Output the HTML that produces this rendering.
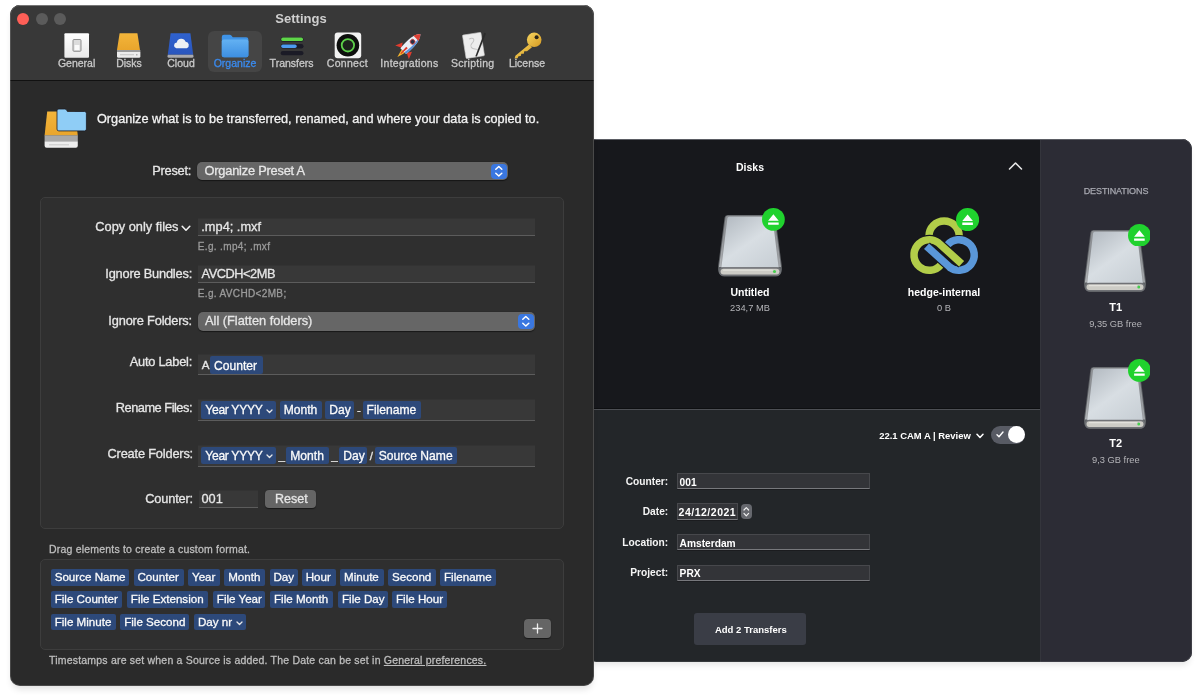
<!DOCTYPE html>
<html lang="en">
<head>
<meta charset="utf-8">
<title>Settings</title>
<style>
*{box-sizing:border-box;margin:0;padding:0}
html,body{width:1200px;height:698px;background:#fff;overflow:hidden}
body{position:relative;font-family:"Liberation Sans",sans-serif;color:#e6e6e6;font-size:12.5px}
.abs,.t,.r{position:absolute}
.t,.r{white-space:nowrap;line-height:16px;height:16px}
.r{text-align:right}
/* ---------- main app window (behind) ---------- */
#app{position:absolute;left:586px;top:139px;width:606px;height:523px;border-radius:10px;background:#232629;overflow:hidden;box-shadow:0 5px 6px -2px rgba(0,0,0,.10)}
#app,#set{will-change:transform}
#app:after,#set:after{content:"";position:absolute;left:0;top:0;right:0;bottom:0;border-radius:10px;border:1px solid rgba(255,255,255,.09);pointer-events:none}
#set:after{border-color:rgba(255,255,255,.15)}
#app .top{position:absolute;left:0;top:0;width:454px;height:270px;background:#17181c;border-bottom:1px solid #0e0f11}
#app .sep{position:absolute;left:0;top:269.500px;width:454px;height:1.300px;background:#4d4f54}
#app .side{position:absolute;left:454px;top:0;width:152px;height:523px;background:#2c2c35;border-left:1px solid #34353c}
#app .hl{position:absolute;left:0;top:0;width:606px;height:1px;background:#4b4d55}
#app .t,#app .r{line-height:14px;height:14px}
.b{font-weight:bold}
#set{-webkit-text-stroke:.3px}
#set .b{-webkit-text-stroke:0}
.c{transform:translateX(-50%)}
.afld{position:absolute;background:#333438;border:1px solid #47484c;border-bottom-color:#77787c;box-shadow:0 1px 0 #1b1c1f}
/* ---------- settings window ---------- */
#set{position:absolute;left:10px;top:5px;width:584px;height:681px;border-radius:10px;background:#2a2a2a;overflow:hidden;box-shadow:0 5px 7px -2px rgba(0,0,0,.12)}
#set .bar{position:absolute;left:0;top:0;width:584px;height:76px;background:#383838;border-bottom:1px solid #111}
#set .bar:before{content:"";position:absolute;left:0;top:0;width:100%;height:1px;background:#5e5e5e}
.tl{position:absolute;top:8px;width:12px;height:12px;border-radius:50%}
.tb{position:absolute;top:52.400px;font-size:10.5px;color:#c9c9c9;line-height:12px;white-space:nowrap;transform:translateX(-50%)}
.grp{position:absolute;background:#2f2f2f;border:1px solid #3d3d3d;border-radius:5px}
.fld{position:absolute;background:#383838;border-bottom:1px solid #5c5c5c;border-top:1px solid #333}
.pop{position:absolute;background:#666;border-radius:5px;box-shadow:0 .5px 1px rgba(0,0,0,.5)}
.pop i{position:absolute;right:1px;top:1.8px;width:16px;height:15px;border-radius:4px;background:#3a77e0}
.tok{position:absolute;height:16px;line-height:16px;background:#2d497a;border-radius:2px;color:#fafafa;white-space:nowrap;padding:0 0 0 4px;font-size:11.6px}
.hint{font-size:10px;color:#9b9b9b}
.btn{position:absolute;background:#656565;border-radius:4px;text-align:center;box-shadow:0 .5px 1px rgba(0,0,0,.5)}
</style>
</head>
<body>

<div id="app">
  <div class="top"></div><div class="sep"></div><div class="side"></div><div class="hl"></div>
  <!--APPBODY-->
  <svg width="0" height="0" style="position:absolute"><defs>
    <linearGradient id="dtop" x1=".1" y1="0" x2=".9" y2="1"><stop offset="0" stop-color="#b4bbc2"/><stop offset=".5" stop-color="#d8dee3"/><stop offset="1" stop-color="#c8cfd5"/></linearGradient><linearGradient id="drim" x1="0" y1="0" x2="1" y2="0"><stop offset="0" stop-color="#b9bcbf"/><stop offset=".08" stop-color="#8d9094"/><stop offset=".92" stop-color="#8d9094"/><stop offset="1" stop-color="#a9acb0"/></linearGradient>
  </defs></svg>
  <div class="t c b" style="left:164px;top:20.7px;font-size:10.5px;color:#fff">Disks</div>
  <svg class="abs" style="left:422px;top:22px" width="15" height="10" viewBox="0 0 15 10"><path d="M1.500 8 7.500 2 13.500 8" fill="none" stroke="#e8e8e8" stroke-width="1.600" stroke-linecap="round" stroke-linejoin="round"/></svg>
  <svg class="abs" style="left:131.3px;top:75.1px" width="66" height="63.5" viewBox="-1 -1 66 63.500" preserveAspectRatio="none">
    <path d="M9.600 0h44.800q2.600 0 3 2.600l6.400 48q.6 4.400-.6 7.200-1.500 3.700-5.600 3.700h-51.200q-4.100 0-5.600-3.700-1.200-2.800-.6-7.200l6.400-48q.4-2.600 3-2.600z" fill="#5f6266"/>
    <path d="M9.800 .8h44.400q2 0 2.300 2l6.500 49.200h-62l6.500-49.200q.3-2 2.300-2z" fill="url(#drim)"/>
    <path d="M11.200 1.800h41.600q1.600 0 1.800 1.500l6 49.200h-57.200l6-49.200q.2-1.500 1.800-1.500z" fill="url(#dtop)"/>
    <rect x=".9" y="52.300" width="62.200" height="8.500" rx="4.200" fill="#707276"/>
    <rect x="2.600" y="53.700" width="58.800" height="5.800" rx="2.900" fill="#cdccc6"/>
    <rect x="5" y="54.600" width="50" height="1.200" rx=".6" fill="#e4e3de" opacity=".9"/>
    <circle cx="56.500" cy="56.500" r="1.500" fill="#45cf4e"/>
    </svg>
  <svg class="abs" style="left:176.3px;top:69.4px" width="22.8" height="22.8" viewBox="-11.4 -11.4 22.8 22.8"><circle r="11.4" fill="#20d22e"/><path d="M0-5.200 5.300 1.300h-10.600zM-5.300 3h10.600v2.300h-10.600z" fill="#fff"/></svg>
  <div class="t c b" style="left:164px;top:145.5px;font-size:10.5px;color:#fff">Untitled</div>
  <div class="t c " style="left:164px;top:162.2px;font-size:9.3px;color:#b4b4b8">234,7 MB</div>
  <svg class="abs" style="left:319px;top:71px" width="80" height="70" viewBox="905 210 80 70">
    <path d="M929 240v-4a15.100 15.100 0 0 1 30.200 0v4" fill="none" stroke="#b2cd49" stroke-width="7.500"/>
    <path d="M947.300 245.200A15.250 15.250 0 1 1 949.800 267.200L926.600 246.200" fill="none" stroke="#17181c" stroke-width="9.700"/>
    <path d="M947.300 245.200A15.250 15.250 0 1 1 949.800 267.200L926.600 246.200" fill="none" stroke="#5a97d9" stroke-width="7.500"/>
    <path d="M940.900 264.800A15.250 15.250 0 1 1 938.400 242.800L961.600 263.800" fill="none" stroke="#17181c" stroke-width="9.700"/>
    <path d="M940.900 264.800A15.250 15.250 0 1 1 938.400 242.800L961.600 263.800" fill="none" stroke="#b2cd49" stroke-width="7.500"/>
    <path d="M949.800 267.200L926.600 246.200" fill="none" stroke="#17181c" stroke-width="9.700" stroke-linecap="butt"/>
    <path d="M951.300 268.550L926.600 246.200" fill="none" stroke="#5a97d9" stroke-width="7.500"/>
  </svg>
  <svg class="abs" style="left:369.6px;top:68.5px" width="23.2" height="23.2" viewBox="-11.6 -11.6 23.2 23.2"><circle r="11.6" fill="#20d22e"/><path d="M0-5.200 5.300 1.300h-10.600zM-5.300 3h10.600v2.300h-10.600z" fill="#fff"/></svg>
  <div class="t c b" style="left:358px;top:145.5px;font-size:10.5px;color:#fff">hedge-internal</div>
  <div class="t c " style="left:358px;top:162.2px;font-size:9.3px;color:#b4b4b8">0 B</div>
  <div class="t c " style="left:530px;top:44.7px;font-size:9px;color:#a8a9b1;letter-spacing:-.1px;-webkit-text-stroke:.25px">DESTINATIONS</div>
  <svg class="abs" style="left:497.2px;top:89.8px" width="64" height="64" viewBox="-1 -1 66 63.500" preserveAspectRatio="none">
    <path d="M9.600 0h44.800q2.600 0 3 2.600l6.400 48q.6 4.400-.6 7.200-1.500 3.700-5.600 3.700h-51.200q-4.100 0-5.600-3.700-1.200-2.800-.6-7.200l6.400-48q.4-2.600 3-2.600z" fill="#5f6266"/>
    <path d="M9.800 .8h44.400q2 0 2.300 2l6.500 49.200h-62l6.500-49.200q.3-2 2.300-2z" fill="url(#drim)"/>
    <path d="M11.200 1.800h41.600q1.600 0 1.800 1.500l6 49.200h-57.200l6-49.200q.2-1.500 1.800-1.500z" fill="url(#dtop)"/>
    <rect x=".9" y="52.300" width="62.200" height="8.500" rx="4.200" fill="#707276"/>
    <rect x="2.600" y="53.700" width="58.800" height="5.800" rx="2.900" fill="#cdccc6"/>
    <rect x="5" y="54.600" width="50" height="1.200" rx=".6" fill="#e4e3de" opacity=".9"/>
    <circle cx="56.500" cy="56.500" r="1.500" fill="#45cf4e"/>
    </svg>
  <svg class="abs" style="left:541.6px;top:84.6px" width="22.8" height="22.8" viewBox="-11.4 -11.4 22.8 22.8"><circle r="11.4" fill="#20d22e"/><path d="M0-5.200 5.300 1.300h-10.600zM-5.300 3h10.600v2.300h-10.600z" fill="#fff"/></svg>
  <div class="t c b" style="left:529.6px;top:161.1px;font-size:11px;color:#fff">T1</div>
  <div class="t c " style="left:529.5px;top:178.2px;font-size:9.3px;color:#b4b4b8">9,35 GB free</div>
  <svg class="abs" style="left:497.2px;top:226.6px" width="64" height="64" viewBox="-1 -1 66 63.500" preserveAspectRatio="none">
    <path d="M9.600 0h44.800q2.600 0 3 2.600l6.400 48q.6 4.400-.6 7.200-1.500 3.700-5.600 3.700h-51.200q-4.100 0-5.600-3.700-1.200-2.800-.6-7.200l6.400-48q.4-2.600 3-2.600z" fill="#5f6266"/>
    <path d="M9.800 .8h44.400q2 0 2.300 2l6.500 49.200h-62l6.500-49.200q.3-2 2.300-2z" fill="url(#drim)"/>
    <path d="M11.200 1.800h41.600q1.600 0 1.800 1.500l6 49.200h-57.200l6-49.200q.2-1.500 1.800-1.500z" fill="url(#dtop)"/>
    <rect x=".9" y="52.300" width="62.200" height="8.500" rx="4.200" fill="#707276"/>
    <rect x="2.600" y="53.700" width="58.800" height="5.800" rx="2.900" fill="#cdccc6"/>
    <rect x="5" y="54.600" width="50" height="1.200" rx=".6" fill="#e4e3de" opacity=".9"/>
    <circle cx="56.500" cy="56.500" r="1.500" fill="#45cf4e"/>
    </svg>
  <svg class="abs" style="left:541.6px;top:220.4px" width="22.8" height="22.8" viewBox="-11.4 -11.4 22.8 22.8"><circle r="11.4" fill="#20d22e"/><path d="M0-5.200 5.300 1.300h-10.600zM-5.300 3h10.600v2.300h-10.600z" fill="#fff"/></svg>
  <div class="t c b" style="left:529.6px;top:297.1px;font-size:11px;color:#fff">T2</div>
  <div class="t c " style="left:529.8px;top:314.2px;font-size:9.3px;color:#b4b4b8">9,3 GB free</div>
  <div class="t b" style="left:293.2px;top:289.7px;font-size:9.45px;color:#fff">22.1 CAM A | Review</div>
  <svg class="abs" style="left:389.5px;top:293.5px" width="8" height="6" viewBox="0 0 8 6"><path d="M1 1.200 4 4.400 7 1.200" fill="none" stroke="#fff" stroke-width="1.500" stroke-linecap="round" stroke-linejoin="round"/></svg>
  <div class="abs" style="left:404.8px;top:286.8px;width:34.4px;height:18px;border-radius:9px;background:#585b64"><svg width="8" height="7" viewBox="0 0 8 7" style="position:absolute;left:5px;top:5.500px"><path d="M1 3.800 3 5.800 7 1" fill="none" stroke="#fff" stroke-width="1.400" stroke-linecap="round" stroke-linejoin="round"/></svg><div style="position:absolute;right:0;top:.3px;width:17.400px;height:17.400px;border-radius:50%;background:#fff"></div></div>
  <div class="r b" style="right:523.8px;top:336.2px;font-size:10.2px;color:#f4f4f4">Counter:</div>
  <div class="r b" style="right:523.8px;top:366.1px;font-size:10.2px;color:#f4f4f4">Date:</div>
  <div class="r b" style="right:523.8px;top:396.5px;font-size:10.2px;color:#f4f4f4">Location:</div>
  <div class="r b" style="right:523.8px;top:426.9px;font-size:10.2px;color:#f4f4f4">Project:</div>
  <div class="afld" style="left:91px;top:334px;width:193.2px;height:16.2px;"></div>
  <div class="t b" style="left:93.6px;top:336.8px;font-size:10.2px;color:#fff">001</div>
  <div class="afld" style="left:91px;top:363.7px;width:61px;height:17.6px;"></div>
  <div class="t b" style="left:92.6px;top:365.5px;font-size:10.5px;letter-spacing:.5px;color:#fff">24/12/2021</div>
  <div class="abs" style="left:155.2px;top:364.8px;width:10.6px;height:15.4px;border-radius:4px;background:#66686e"><svg width="10.600" height="15.400" viewBox="0 0 10.600 15.400" style="position:absolute;left:0;top:0"><path d="M3 6 5.300 3.600 7.600 6M3 9.400 5.300 11.800 7.600 9.400" fill="none" stroke="#f0f0f0" stroke-width="1.200" stroke-linecap="round" stroke-linejoin="round"/></svg></div>
  <div class="afld" style="left:91px;top:395px;width:193.2px;height:16.2px;"></div>
  <div class="t b" style="left:93.6px;top:397.6px;font-size:10.2px;color:#fff">Amsterdam</div>
  <div class="afld" style="left:91px;top:425.7px;width:193.2px;height:16.2px;"></div>
  <div class="t b" style="left:93.6px;top:427.5px;font-size:10.2px;color:#fff">PRX</div>
  <div class="abs" style="left:108px;top:474.3px;width:112px;height:32.1px;border-radius:3px;background:#3a3d46"></div>
  <div class="t c b" style="left:164.8px;top:484.0px;font-size:9.5px;color:#fff">Add 2 Transfers</div>
  <!--/APPBODY-->
</div>

<div id="set">
  <div class="bar">
    <div class="tl" style="left:7px;background:#fe5f57"></div>
    <div class="tl" style="left:26px;background:#5b5b5b"></div>
    <div class="tl" style="left:44px;background:#5b5b5b"></div>
    <div class="t b" style="left:291px;top:5.800px;font-size:13px;color:#cfcfcf;transform:translateX(-50%)">Settings</div>
    <div class="abs" style="left:198px;top:26px;width:54px;height:41px;border-radius:6px;background:#454545"></div>
    <!--TBICONS-->
    <svg class="abs" style="left:0;top:0" width="584" height="76" viewBox="10 5 584 76">
      <defs>
        <linearGradient id="gy" x1="0" y1="0" x2="0" y2="1"><stop offset="0" stop-color="#f3b53a"/><stop offset="1" stop-color="#e9a52c"/></linearGradient>
        <linearGradient id="gb" x1="0" y1="0" x2="0" y2="1"><stop offset="0" stop-color="#2f62cf"/><stop offset="1" stop-color="#2a56bd"/></linearGradient>
        <linearGradient id="gf" x1="0" y1="0" x2="0" y2="1"><stop offset="0" stop-color="#63b1f2"/><stop offset="1" stop-color="#3d8fe2"/></linearGradient>
        <linearGradient id="gk" x1="0" y1="0" x2="1" y2="1"><stop offset="0" stop-color="#f6d560"/><stop offset="1" stop-color="#d59a22"/></linearGradient>
        <linearGradient id="gw" x1="0" y1="0" x2="0" y2="1"><stop offset="0" stop-color="#ffffff"/><stop offset="1" stop-color="#e9e9e9"/></linearGradient>
      </defs>
      <!-- General -->
      <rect x="64.4" y="33.3" width="24.6" height="24.4" rx="1" fill="url(#gw)"/>
      <rect x="73" y="39.5" width="8" height="11.8" rx="1" fill="#dcdcdc" stroke="#8f8f8f" stroke-width="1"/>
      <rect x="74.6" y="45" width="4.8" height="5" fill="#fafafa"/>
      <!-- Disks -->
      <path d="M119.6 33.2h17.8l2.6 16.8h-23z" fill="url(#gy)"/>
      <rect x="117" y="50" width="23.4" height="2" fill="#9a9a9a"/>
      <path d="M117 52h23.4v4.2q0 1.5-1.5 1.5h-20.4q-1.5 0-1.5-1.5z" fill="#ececec"/>
      <rect x="120" y="54.3" width="14" height=".9" fill="#c2c2c2"/>
      <rect x="136" y="54" width="1.5" height="1.5" fill="#b0b0b0"/>
      <!-- Cloud -->
      <path d="M170.6 33.2h19.8l2.8 21.6h-25.4z" fill="url(#gb)"/>
      <path d="M167.8 54.8h25.4l.3 1.6q0 1.3-1.4 1.3h-23.2q-1.4 0-1.4-1.3z" fill="#a9a9ad"/>
      <path d="M176.3 48.3a3 3 0 0 1 .5-5.9 4.6 4.6 0 0 1 8.8-.6 3.4 3.4 0 0 1 1.2 6.5z" fill="#eef1f4"/>
      <!-- Organize folder -->
      <path d="M221.8 37q0-2.2 2.2-2.2h5.6q1.2 0 2 1l1.200 1.500h13.400q2.200 0 2.200 2.200v15.500q0 2.200-2.200 2.200h-22.200q-2.200 0-2.200-2.200z" fill="#3f93e6"/>
      <rect x="221.800" y="39.600" width="26.600" height="17.600" rx="2" fill="url(#gf)"/>
      <!-- Transfers -->
      <rect x="280.700" y="37.200" width="22.800" height="4.500" rx="2.200" fill="#1b1b26"/>
      <rect x="281.200" y="37.600" width="21.800" height="3.500" rx="1.700" fill="#5fd648"/>
      <rect x="280.700" y="44" width="22.800" height="4.500" rx="2.200" fill="#1b1b26"/>
      <rect x="281.200" y="44.400" width="15.500" height="3.500" rx="1.700" fill="#4d9bf0"/>
      <rect x="280.700" y="51" width="22.800" height="4.300" rx="2.100" fill="#1b1b26"/>
      <!-- Connect -->
      <rect x="334.700" y="32.400" width="26.500" height="25.800" rx="3" fill="#f2f2f2"/>
      <circle cx="347.900" cy="45.300" r="11.300" fill="#0d0f0d"/>
      <circle cx="347.900" cy="45.300" r="6.200" fill="#1c221c" stroke="#5ed14a" stroke-width="1.800"/>
      <!-- Integrations rocket -->
      <g transform="translate(409.800 44.600) rotate(45) scale(.88)">
        <path d="M-7.500 4 -11 12.500l7-3.500zM7.500 4 11 12.500l-7-3.500z" fill="#e23b2e"/>
        <path d="M-2.600 10.500Q0 20 0 20Q0 20 2.600 10.500z" fill="#f6b52c"/>
        <path d="M0-17C5-11.500 5.800-3 4.600 10.500h-9.200C-5.800-3-5-11.500 0-17z" fill="#e9eef5"/>
        <path d="M0-17C5-11.500 5.800-3 4.600 10.500h-2.800C4-3 3-11.500 0-17z" fill="#5b8fd8"/>
        <path d="M0-17c2.100 2.300 3.300 4.500 4.100 7h-8.200c.8-2.500 2-4.700 4.100-7z" fill="#dd4034"/>
        <circle cx="0" cy="-4.500" r="2.700" fill="#2a2f45" stroke="#c44" stroke-width="1"/>
        <path d="M-1.200 4.500h2.400l-.6 10h-1.200z" fill="#e23b2e"/>
      </g>
      <!-- Scripting -->
      <g transform="rotate(-9 473.500 45.500)">
        <rect x="464.200" y="33.600" width="18.600" height="23.600" rx=".8" fill="#ededed" stroke="#c9c9c9" stroke-width=".6"/>
        <path d="M470 38.500c3.500-1.500 6 .5 4 3s-4.500 2.500-3 5.500 5 1.500 6.500 4" fill="none" stroke="#c3c3c3" stroke-width="1"/>
      </g>
      <path d="M484.300 32.800 486 33.600 477.200 55.800 475.800 57.300 475.700 55.200z" fill="#2b2b2b"/>
      <!-- License key -->
      <path d="M529 44.600 515.400 55.800 514.600 58.400 517.600 58.200 518.500 56.200 520.800 56.100 521.300 53.800 523.800 53.700 524.300 51.300 527 51.200 532 47.200z" fill="url(#gk)"/>
      <circle cx="534.200" cy="39.800" r="7.300" fill="url(#gk)"/>
      <circle cx="536.600" cy="37.300" r="2" fill="#2b2418"/>
    </svg>
    <!--/TBICONS-->
    <div class="tb" style="left:66.600px">General</div>
    <div class="tb" style="left:119px">Disks</div>
    <div class="tb" style="left:171px">Cloud</div>
    <div class="tb" style="left:225px;color:#3a8bf0">Organize</div>
    <div class="tb" style="left:281.600px">Transfers</div>
    <div class="tb" style="left:337.400px;letter-spacing:.3px">Connect</div>
    <div class="tb" style="left:399.400px;letter-spacing:.27px">Integrations</div>
    <div class="tb" style="left:462.700px;letter-spacing:.28px">Scripting</div>
    <div class="tb" style="left:517px">License</div>
  </div>
  <!--SETBODY-->
  <svg class="abs" style="left:30px;top:100px" width="52" height="48" viewBox="40 105 52 48">
    <path d="M47.200 111.600h27.600l3 23.800h-33.200z" fill="url(#gy)"/>
    <rect x="44.600" y="135.300" width="33.200" height="5.900" fill="#a8a8a8"/>
    <path d="M44.600 141.200h33.200v4.600q0 2-2 2h-29.200q-2 0-2-2z" fill="#ededed"/>
    <rect x="49" y="144.300" width="20" height="1" fill="#c8c8c8"/>
    <path d="M57 110.800q0-1.800 1.800-1.800h6q1.200 0 1.800 1l.8 1.500h17.200q1.800 0 1.800 1.800v15.800q0 1.800-1.800 1.800h-25.800q-1.800 0-1.800-1.800z" fill="#8fcdf6" stroke="#1c1c24" stroke-width=".8"/>
  </svg>
  <div class="t" style="left:87px;top:105.5px;font-size:12.7px;color:#f2f2f2">Organize what is to be transferred, renamed, and where your data is copied to.</div>
  <div class="r" style="right:403px;top:158.2px;font-size:12.8px;letter-spacing:-0.27px">Preset:</div>
  <div class="pop" style="left:187px;top:157px;width:311px;height:18px;"><i><svg width="16" height="15" viewBox="0 0 16 15" style="position:absolute;left:0;top:0"><path d="M4.800 5.300 7.800 2.500 10.800 5.300M4.800 9.200 7.800 12 10.800 9.200" fill="none" stroke="#fff" stroke-width="1.500" stroke-linecap="round" stroke-linejoin="round"/></svg></i></div>
  <div class="t" style="left:194.5px;top:157.9px;font-size:12.8px;letter-spacing:-.2px">Organize Preset A</div>
  <div class="grp" style="left:30px;top:192px;width:524px;height:331.5px;"></div>
  <div class="r" style="right:415.5px;top:213.9px;font-size:12.8px;">Copy only files</div>
  <div class="r" style="right:402px;top:260.9px;font-size:12.8px;letter-spacing:-0.20px">Ignore Bundles:</div>
  <div class="r" style="right:402px;top:307.9px;font-size:12.8px;letter-spacing:-0.16px">Ignore Folders:</div>
  <div class="r" style="right:402px;top:348.9px;font-size:12.8px;letter-spacing:-0.22px">Auto Label:</div>
  <div class="r" style="right:402px;top:394.6px;font-size:12.8px;letter-spacing:-0.48px">Rename Files:</div>
  <div class="r" style="right:401px;top:440.6px;font-size:12.8px;letter-spacing:-0.18px">Create Folders:</div>
  <div class="r" style="right:401px;top:485.9px;font-size:12.8px;letter-spacing:-0.17px">Counter:</div>
  <div class="fld" style="left:187.5px;top:213px;width:337px;height:18px;"></div>
  <div class="t" style="left:191.3px;top:214.1px;font-size:12.8px;">.mp4; .mxf</div>
  <div class="t" style="left:187.8px;top:235.8px;line-height:12px;font-size:10px;color:#9b9b9b;letter-spacing:.35px">E.g. .mp4; .mxf</div>
  <div class="fld" style="left:187.5px;top:260px;width:337px;height:18px;"></div>
  <div class="t" style="left:191.5px;top:261.1px;font-size:12.8px;letter-spacing:-.45px">AVCDH&lt;2MB</div>
  <div class="t" style="left:187.8px;top:283.0px;line-height:12px;font-size:10px;color:#9b9b9b;letter-spacing:.35px">E.g. AVCHD&lt;2MB;</div>
  <div class="pop" style="left:187.5px;top:307px;width:337.5px;height:18.5px;"><i><svg width="16" height="15" viewBox="0 0 16 15" style="position:absolute;left:0;top:0"><path d="M4.800 5.300 7.800 2.500 10.800 5.300M4.800 9.200 7.800 12 10.800 9.200" fill="none" stroke="#fff" stroke-width="1.500" stroke-linecap="round" stroke-linejoin="round"/></svg></i></div>
  <div class="t" style="left:195px;top:307.9px;font-size:12.8px;">All (Flatten folders)</div>
  <div class="fld" style="left:187.5px;top:348.5px;width:337px;height:21.5px;"></div>
  <div class="t" style="left:191.7px;top:352.0px;font-size:11.6px;">A</div>
  <div class="tok" style="padding-top:1.200px;font-size:12.1px;left:200px;top:351px;width:52.5px;height:18px;line-height:18px">Counter</div>
  <div class="fld" style="left:187.5px;top:394px;width:337px;height:22px;"></div>
  <div class="tok" style="padding-top:1.200px;font-size:12.1px;letter-spacing:-.3px;left:191.3px;top:396.3px;width:75px;height:17.5px;line-height:17.5px">Year YYYY<svg class="chv" width="7" height="5" viewBox="0 0 7 5" style="position:absolute;right:3.5px;top:7.25px"><path d="M1 1 3.5 3.5 6 1" fill="none" stroke="#e8e8e8" stroke-width="1.3" stroke-linecap="round" stroke-linejoin="round"/></svg></div>
  <div class="tok" style="padding-top:1.200px;font-size:12.1px;left:269.7px;top:396.3px;width:42.3px;height:17.5px;line-height:17.5px">Month</div>
  <div class="tok" style="padding-top:1.200px;font-size:12.1px;left:315.3px;top:396.3px;width:28.4px;height:17.5px;line-height:17.5px">Day</div>
  <div class="t" style="left:347px;top:396.5px;font-size:11.6px;">-</div>
  <div class="tok" style="padding-top:1.200px;font-size:12.1px;left:352.5px;top:396.3px;width:58px;height:17.5px;line-height:17.5px">Filename</div>
  <div class="fld" style="left:187.5px;top:439.5px;width:337px;height:22px;"></div>
  <div class="tok" style="padding-top:1.200px;font-size:12.1px;letter-spacing:-.3px;left:191.3px;top:442px;width:75px;height:17.2px;line-height:17.2px">Year YYYY<svg class="chv" width="7" height="5" viewBox="0 0 7 5" style="position:absolute;right:3.5px;top:7.1px"><path d="M1 1 3.5 3.5 6 1" fill="none" stroke="#e8e8e8" stroke-width="1.3" stroke-linecap="round" stroke-linejoin="round"/></svg></div>
  <div class="t" style="left:268.5px;top:442.5px;font-size:11.6px;">_</div>
  <div class="tok" style="padding-top:1.200px;font-size:12.1px;left:276.3px;top:442px;width:42.9px;height:17.2px;line-height:17.2px">Month</div>
  <div class="t" style="left:321.2px;top:442.5px;font-size:11.6px;">_</div>
  <div class="tok" style="padding-top:1.200px;font-size:12.1px;left:329.2px;top:442px;width:28.3px;height:17.2px;line-height:17.2px">Day</div>
  <div class="t" style="left:359.8px;top:442.5px;font-size:11.6px;">/</div>
  <div class="tok" style="padding-top:1.200px;font-size:12.1px;left:364.7px;top:442px;width:82.8px;height:17.2px;line-height:17.2px">Source Name</div>
  <div class="fld" style="left:188.5px;top:485.3px;width:59px;height:18px;"></div>
  <div class="t" style="left:191.5px;top:485.9px;font-size:12.8px;">001</div>
  <div class="btn" style="left:255.3px;top:485px;width:51px;height:18.3px;"></div>
  <div class="t" style="left:265px;top:485.7px;font-size:12.5px;">Reset</div>
  <div class="t" style="left:39px;top:537.6px;line-height:12px;font-size:10.5px;color:#bdbdbd;letter-spacing:.2px">Drag elements to create a custom format.</div>
  <div class="grp" style="left:30px;top:554px;width:524px;height:90.5px;"></div>
  <div class="tok" style="left:40.7px;top:564px;width:78.3px;height:16.5px;line-height:16.5px">Source Name</div>
  <div class="tok" style="left:123.5px;top:564px;width:50.3px;height:16.5px;line-height:16.5px">Counter</div>
  <div class="tok" style="left:178px;top:564px;width:31.7px;height:16.5px;line-height:16.5px">Year</div>
  <div class="tok" style="left:214.2px;top:564px;width:40.8px;height:16.5px;line-height:16.5px">Month</div>
  <div class="tok" style="left:259.5px;top:564px;width:28px;height:16.5px;line-height:16.5px">Day</div>
  <div class="tok" style="left:291.7px;top:564px;width:34.1px;height:16.5px;line-height:16.5px">Hour</div>
  <div class="tok" style="left:330px;top:564px;width:44.2px;height:16.5px;line-height:16.5px">Minute</div>
  <div class="tok" style="left:378px;top:564px;width:47.8px;height:16.5px;line-height:16.5px">Second</div>
  <div class="tok" style="left:430px;top:564px;width:55.8px;height:16.5px;line-height:16.5px">Filename</div>
  <div class="tok" style="left:40.7px;top:586.3px;width:71.5px;height:16.7px;line-height:16.7px">File Counter</div>
  <div class="tok" style="left:116.8px;top:586.3px;width:80.9px;height:16.7px;line-height:16.7px">File Extension</div>
  <div class="tok" style="left:202.8px;top:586.3px;width:52.7px;height:16.7px;line-height:16.7px">File Year</div>
  <div class="tok" style="left:260px;top:586.3px;width:63.3px;height:16.7px;line-height:16.7px">File Month</div>
  <div class="tok" style="left:328px;top:586.3px;width:50px;height:16.7px;line-height:16.7px">File Day</div>
  <div class="tok" style="left:382px;top:586.3px;width:55.2px;height:16.7px;line-height:16.7px">File Hour</div>
  <div class="tok" style="left:40.7px;top:608.8px;width:65.3px;height:16.7px;line-height:16.7px">File Minute</div>
  <div class="tok" style="left:110.2px;top:608.8px;width:69.1px;height:16.7px;line-height:16.7px">File Second</div>
  <div class="tok" style="left:184px;top:608.8px;width:52.3px;height:16.7px;line-height:16.7px">Day nr<svg class="chv" width="7" height="5" viewBox="0 0 7 5" style="position:absolute;right:3.5px;top:6.85px"><path d="M1 1 3.5 3.5 6 1" fill="none" stroke="#e8e8e8" stroke-width="1.3" stroke-linecap="round" stroke-linejoin="round"/></svg></div>
  <div class="btn" style="left:514.2px;top:614px;width:27.1px;height:19px;"><svg width="13" height="13" viewBox="0 0 13 13" style="position:absolute;left:7px;top:3px"><path d="M6.500 2v9M2 6.500h9" stroke="#eee" stroke-width="1.300" stroke-linecap="round"/></svg></div>
  <div class="t" style="left:39px;top:648.9px;line-height:12px;font-size:10.5px;color:#bdbdbd;letter-spacing:.2px">Timestamps are set when a Source is added. The Date can be set in <u>General preferences.</u></div>
  <svg class="abs" style="left:170.500px;top:219.500px" width="10" height="7" viewBox="0 0 10 7"><path d="M1.200 1.300 5 5.200 8.800 1.300" fill="none" stroke="#f0f0f0" stroke-width="1.600" stroke-linecap="round" stroke-linejoin="round"/></svg>
  <!--/SETBODY-->
</div>

</body>
</html>
